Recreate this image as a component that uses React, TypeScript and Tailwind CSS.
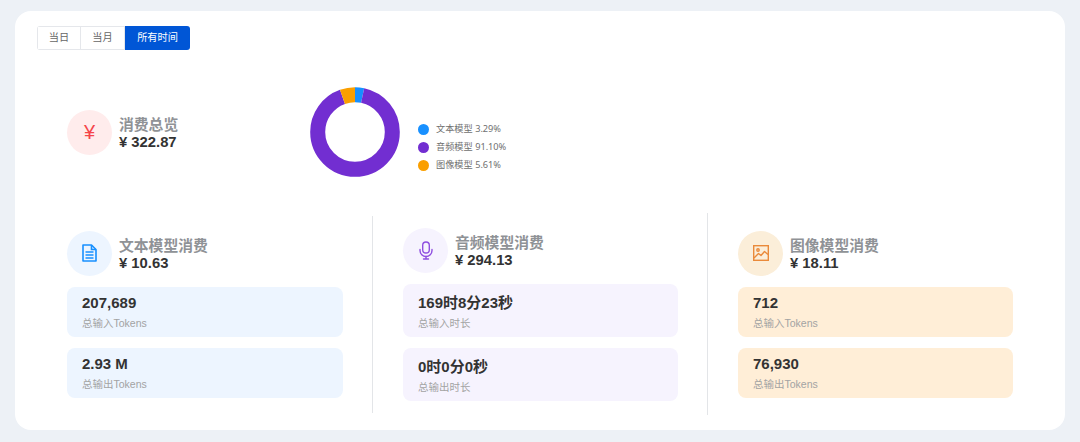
import React from "react";

const FONT = "[font-family:'Liberation_Sans','Noto_Sans_CJK_SC',sans-serif]";

function DocIcon() {
  return (
    <svg width="15" height="18" viewBox="0 0 15 18" fill="none" stroke="#1890ff" strokeWidth="1.6">
      <path d="M1 1h8.500l4.500 4.500v11.500h-13z" strokeLinejoin="round" />
      <path d="M9.500 1v4.500h4.500" />
      <path d="M3.500 8h8M3.500 11h8M3.500 14h8" />
    </svg>
  );
}

function MicIcon() {
  return (
    <svg width="14" height="19" viewBox="0 0 14 19" fill="none" stroke="#8f4fe0" strokeWidth="1.4" strokeLinecap="round">
      <rect x="3.700" y="1" width="6.600" height="11" rx="3.300" />
      <path d="M1 8.500v1a6 6 0 0 0 12 0v-1" />
      <path d="M7 15.500v2.500M4.500 18h5" />
    </svg>
  );
}

function ImageIcon() {
  return (
    <svg width="16" height="16" viewBox="0 0 16 16" fill="none" stroke="#ea8a3a" strokeWidth="1.4">
      <rect x="0.700" y="0.700" width="14.600" height="14.600" />
      <circle cx="5" cy="5" r="1.200" />
      <path d="M1 13l4.500-4.500 2.500 2 3.500-4 3.500 3" strokeLinejoin="round" />
    </svg>
  );
}

function Donut() {
  const r = 37.3;
  const c = 2 * Math.PI * r;
  const data = [
    { v: 0.0329, color: "#1890ff" },
    { v: 0.911, color: "#722ed1" },
    { v: 0.0561, color: "#fa9f00" },
  ];
  let off = 0;
  return (
    <svg width="90" height="90" viewBox="0 0 90 90" className="shrink-0">
      <g transform="rotate(-90 45 45)">
        {data.map((d) => {
          const el = (
            <circle
              key={d.color}
              cx="45"
              cy="45"
              r={r}
              fill="none"
              stroke={d.color}
              strokeWidth="15"
              strokeDasharray={`${d.v * c} ${c}`}
              strokeDashoffset={-off * c}
            />
          );
          off += d.v;
          return el;
        })}
      </g>
    </svg>
  );
}

function LegendItem({ dot, text }: { dot: string; text: string }) {
  return (
    <div className="flex h-[18px] items-center gap-[7px]">
      <span className={`h-[11px] w-[11px] rounded-full ${dot}`} />
      <span className="text-[9.200px] leading-[18px] text-[#707070] [font-family:'Noto_Sans','Noto_Sans_CJK_SC',sans-serif]">{text}</span>
    </div>
  );
}

function Stat({
  value,
  label,
  bg,
  box,
  num,
  gap,
}: {
  value: string;
  label: string;
  bg: string;
  box: string;
  num: string;
  gap: string;
}) {
  return (
    <div className={`rounded-[8px] pl-[15px] ${bg} ${box}`}>
      <div className={`text-[15px] font-bold text-[#333] ${num}`}>{value}</div>
      <div className={`text-[10.500px] leading-[14px] text-[#a3a3a3] ${gap}`}>{label}</div>
    </div>
  );
}

function Heading({
  circle,
  icon,
  title,
  value,
}: {
  circle: string;
  icon: React.ReactNode;
  title: string;
  value: string;
}) {
  return (
    <div className="flex items-center gap-[7px]">
      <div className={`flex h-[45px] w-[45px] shrink-0 items-center justify-center rounded-full ${circle}`}>{icon}</div>
      <div className="pt-[4px]">
        <div className="text-[14.800px] font-bold leading-[17px] text-[#8f9296]">{title}</div>
        <div className="text-[14.800px] font-bold leading-[17px] text-[#333]">{value}</div>
      </div>
    </div>
  );
}

export default function App() {
  return (
    <div className={`h-[442px] w-[1080px] overflow-hidden bg-[#edf1f6] pt-[11px] ${FONT}`}>
      <div className="ml-[15px] h-[419px] w-[1050px] rounded-[16px] bg-white px-[22px] pt-[15px]">
        <div className="flex h-[24px] w-[153px] overflow-hidden rounded-[3px] text-[10.200px]">
          <div className="flex w-[44px] items-center justify-center border border-[#e5e7eb] text-[#666]">当日</div>
          <div className="flex w-[44px] items-center justify-center border-y border-r border-[#e5e7eb] text-[#666]">当月</div>
          <div className="flex w-[65px] items-center justify-center bg-[#0056d6] text-white">所有时间</div>
        </div>

        <div className="mt-[37px] flex h-[90px]">
          <div className="flex w-[273px] items-center pl-[30px]">
            <Heading
              circle="bg-[#ffecec] text-[20px] text-[#f5454a]"
              icon="¥"
              title="消费总览"
              value="¥ 322.87"
            />
          </div>
          <Donut />
          <div className="ml-[18px] flex flex-col justify-end pb-[3px]">
            <LegendItem dot="bg-[#1890ff]" text="文本模型 3.29%" />
            <LegendItem dot="bg-[#722ed1]" text="音频模型 91.10%" />
            <LegendItem dot="bg-[#fa9f00]" text="图像模型 5.61%" />
          </div>
        </div>

        <div className="mt-[36px] grid h-[202px] grid-cols-[336px_335px_335px]">
          <div className="flex h-[197px] flex-col justify-center self-center border-r border-[#e3e5e8] pl-[30px]">
            <Heading
              circle="bg-[#edf5ff]"
              icon={<DocIcon />}
              title="文本模型消费"
              value="¥ 10.63"
            />
            <div className="mt-[11px] flex flex-col gap-[11px]">
              <Stat value="207,689" label="总输入Tokens" bg="bg-[#edf5ff]" box="h-[50px] w-[276px] pt-[7px]" num="leading-[17px]" gap="mt-[5px]" />
              <Stat value="2.93 M" label="总输出Tokens" bg="bg-[#edf5ff]" box="h-[50px] w-[276px] pt-[7px]" num="leading-[17px]" gap="mt-[5px]" />
            </div>
          </div>
          <div className="flex flex-col justify-center border-r border-[#e3e5e8] pl-[30px]">
            <Heading
              circle="bg-[#f6f3fe]"
              icon={<MicIcon />}
              title="音频模型消费"
              value="¥ 294.13"
            />
            <div className="mt-[11px] flex flex-col gap-[11px]">
              <Stat value="169时8分23秒" label="总输入时长" bg="bg-[#f6f3fe]" box="h-[53px] w-[275px] pt-[9px]" num="leading-[20px]" gap="mt-[3px]" />
              <Stat value="0时0分0秒" label="总输出时长" bg="bg-[#f6f3fe]" box="h-[53px] w-[275px] pt-[9px]" num="leading-[20px]" gap="mt-[3px]" />
            </div>
          </div>
          <div className="flex flex-col justify-center pl-[30px]">
            <Heading
              circle="bg-[#fbeed9]"
              icon={<ImageIcon />}
              title="图像模型消费"
              value="¥ 18.11"
            />
            <div className="mt-[11px] flex flex-col gap-[11px]">
              <Stat value="712" label="总输入Tokens" bg="bg-[#ffeed7]" box="h-[50px] w-[275px] pt-[7px]" num="leading-[17px]" gap="mt-[5px]" />
              <Stat value="76,930" label="总输出Tokens" bg="bg-[#ffeed7]" box="h-[50px] w-[275px] pt-[7px]" num="leading-[17px]" gap="mt-[5px]" />
            </div>
          </div>
        </div>
      </div>
    </div>
  );
}
